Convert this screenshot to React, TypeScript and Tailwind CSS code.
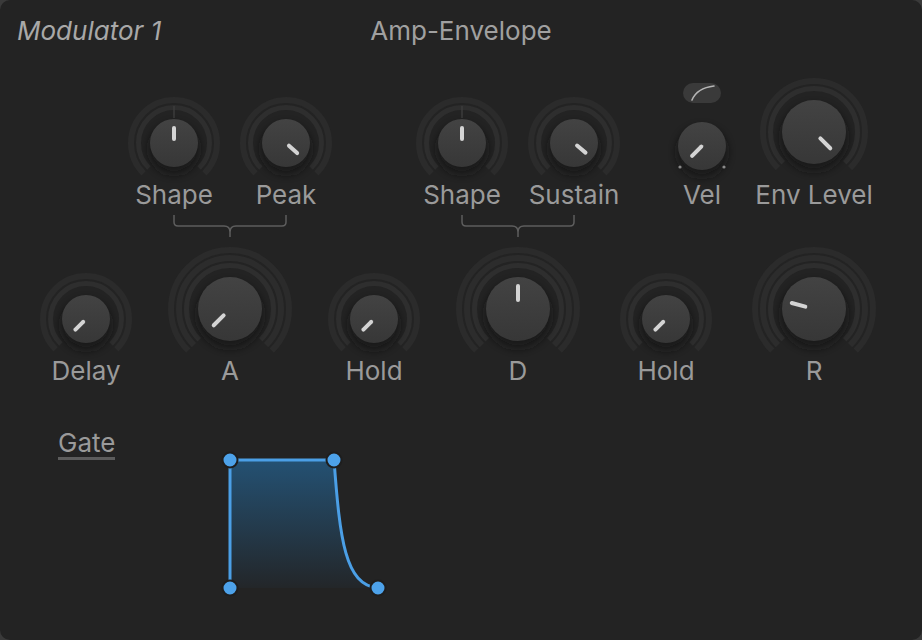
import { useId, type ReactNode } from "react";

type Ring = { r: number; w: number; c: string };

const SMALL_RINGS: Ring[] = [
  { r: 43, w: 6, c: "#2b2b2b" },
  { r: 35.5, w: 5, c: "#2e2e2e" },
];
const BIG_RINGS: Ring[] = [
  { r: 59, w: 6, c: "#2b2b2b" },
  { r: 51, w: 6, c: "#2c2c2c" },
  { r: 43.5, w: 5, c: "#2e2e2e" },
];
const ENV_RINGS: Ring[] = [
  { r: 51, w: 6, c: "#2b2b2b" },
  { r: 43.5, w: 5, c: "#2e2e2e" },
];

const pt = (cx: number, cy: number, r: number, deg: number) => {
  const a = (deg * Math.PI) / 180;
  return [cx + r * Math.sin(a), cy - r * Math.cos(a)];
};

const arc = (cx: number, cy: number, r: number) => {
  const [x1, y1] = pt(cx, cy, r, -135);
  const [x2, y2] = pt(cx, cy, r, 135);
  return `M${x1} ${y1} A${r} ${r} 0 1 1 ${x2} ${y2}`;
};

type DialProps = {
  width: number;
  height: number;
  cy: number;
  body: number;
  angle: number;
  rings?: Ring[];
  tick?: [number, number];
  bipolar?: boolean;
  children?: ReactNode;
};

function Dial({ width, height, cy, body, angle, rings = [], tick = [4, 15], bipolar, children }: DialProps) {
  const id = useId().replace(/[^a-zA-Z0-9]/g, "");
  const cx = width / 2;
  const [x1, y1] = pt(cx, cy, tick[0], angle);
  const [x2, y2] = pt(cx, cy, tick[1], angle);

  return (
    <svg width={width} height={height} viewBox={`0 0 ${width} ${height}`} className="block shrink-0 overflow-visible">
      <defs>
        <linearGradient id={`g${id}`} x1="0" y1="0" x2="0" y2="1">
          <stop offset="0" stopColor="#434343" />
          <stop offset="1" stopColor="#373737" />
        </linearGradient>
        <filter id={`s${id}`} x="-60%" y="-60%" width="220%" height="220%">
          <feGaussianBlur stdDeviation="4" />
        </filter>
      </defs>
      {rings.map((ring) => (
        <path key={ring.r} d={arc(cx, cy, ring.r)} fill="none" stroke={ring.c} strokeWidth={ring.w} />
      ))}
      {bipolar && <line x1={cx} y1={cy - 37} x2={cx} y2={cy - body - 1} stroke="#3d3d3d" strokeWidth={1.5} />}
      <circle cx={cx} cy={cy + 6} r={body + 1} fill="#121212" opacity={0.75} filter={`url(#s${id})`} />
      <circle cx={cx} cy={cy} r={body} fill={`url(#g${id})`} />
      <line x1={x1} y1={y1} x2={x2} y2={y2} stroke="#d4d4d4" strokeWidth={4} strokeLinecap="round" />
      {children}
    </svg>
  );
}

function Label({ children }: { children: ReactNode }) {
  return <span className="block whitespace-nowrap text-[26px] leading-[28px] text-[#9a9a9a]">{children}</span>;
}

function SmallKnob({ label, angle, bipolar, top }: { label: string; angle: number; bipolar?: boolean; top: "row1" | "row2" }) {
  return (
    <div className={`flex flex-col items-center ${top === "row1" ? "mt-[19px] w-[112px]" : "mt-[26px] w-full"}`}>
      <Dial width={92} height={top === "row1" ? 84 : 84} cy={46} body={24} angle={angle} rings={SMALL_RINGS} bipolar={bipolar} />
      <Label>{label}</Label>
    </div>
  );
}

function BigKnob({ label, angle }: { label: string; angle: number }) {
  return (
    <div className="flex w-full flex-col items-center">
      <Dial width={124} height={110} cy={62} body={32} angle={angle} rings={BIG_RINGS} tick={[9, 23]} />
      <Label>{label}</Label>
    </div>
  );
}

function Bracket() {
  return (
    <svg width="116" height="26" viewBox="0 0 116 26" className="mx-auto mt-[4px] block">
      <path
        d="M2 2 V9 Q2 13 6 13 H52 Q58 13 58 19 M114 2 V9 Q114 13 110 13 H64 Q58 13 58 19 V24"
        fill="none"
        stroke="#5e5e5e"
        strokeWidth="1.5"
      />
    </svg>
  );
}

function Envelope() {
  return (
    <svg width="180" height="160" viewBox="0 0 180 160" className="mt-[16px] block shrink-0">
      <defs>
        <linearGradient id="envfill" x1="0" y1="0" x2="0" y2="1">
          <stop offset="0" stopColor="#245173" />
          <stop offset="1" stopColor="#232629" />
        </linearGradient>
      </defs>
      <path d="M15 15 H119 C125 95 130 140 163 143 H15 Z" fill="url(#envfill)" />
      <path d="M15 143 V15 H119 C125 95 130 140 163 143" fill="none" stroke="#4b9fe6" strokeWidth="3" />
      {[
        [15, 15],
        [119, 15],
        [163, 143],
        [15, 143],
      ].map(([x, y]) => (
        <circle key={`${x}-${y}`} cx={x} cy={y} r={7.5} fill="#4da2ea" stroke="#1e1e1e" strokeWidth="2" />
      ))}
    </svg>
  );
}

export default function App() {
  return (
    <div className="h-[640px] w-[922px] bg-[#3a3a3a] font-[Inter,'Noto_Sans',sans-serif]">
      <div className="h-full w-full overflow-hidden rounded-[10px] bg-[#232323]">
        <header className="mt-[17px] grid h-[28px] grid-cols-[1fr_auto_1fr]">
          <span className="pl-[17px] text-[26px] leading-[28px] italic text-[#a8a8a8]">Modulator 1</span>
          <span className="text-[26px] leading-[28px] text-[#a0a0a0]">Amp-Envelope</span>
          <span />
        </header>

        <section className="mt-[33px] flex items-start pl-[118px]">
          <div className="flex w-[224px] flex-col">
            <div className="flex">
              <SmallKnob label="Shape" angle={0} bipolar top="row1" />
              <SmallKnob label="Peak" angle={132} top="row1" />
            </div>
            <Bracket />
          </div>

          <div className="ml-[64px] flex w-[224px] flex-col">
            <div className="flex">
              <SmallKnob label="Shape" angle={0} bipolar top="row1" />
              <SmallKnob label="Sustain" angle={130} top="row1" />
            </div>
            <Bracket />
          </div>

          <div className="ml-[16px] flex w-[112px] flex-col items-center">
            <button className="mt-[5px] flex h-[20px] w-[38px] items-center justify-center rounded-full bg-[#3a3a3a]">
              <svg width="38" height="20" viewBox="0 0 38 20">
                <path d="M9 17 Q14 5 31 3" fill="none" stroke="#b5b5b5" strokeWidth="1.6" strokeLinecap="round" />
              </svg>
            </button>
            <div className="mt-[19px]">
              <Dial width={48} height={59} cy={24} body={24} angle={-135} tick={[1, 14]}>
                <circle cx={2} cy={45} r={1.6} fill="#8a8a8a" />
                <circle cx={46} cy={45} r={1.6} fill="#8a8a8a" />
              </Dial>
            </div>
            <Label>Vel</Label>
          </div>

          <div className="flex w-[112px] flex-col items-center">
            <Dial width={108} height={103} cy={54} body={32} angle={135} rings={ENV_RINGS} tick={[9, 23]} />
            <Label>Env Level</Label>
          </div>
        </section>

        <section className="mt-[8px] flex items-start pl-[14px]">
          <div className="w-[144px]">
            <SmallKnob label="Delay" angle={-135} top="row2" />
          </div>
          <div className="w-[144px]">
            <BigKnob label="A" angle={-135} />
          </div>
          <div className="w-[144px]">
            <SmallKnob label="Hold" angle={-135} top="row2" />
          </div>
          <div className="w-[144px]">
            <BigKnob label="D" angle={0} />
          </div>
          <div className="w-[152px]">
            <SmallKnob label="Hold" angle={-135} top="row2" />
          </div>
          <div className="w-[144px]">
            <BigKnob label="R" angle={-75} />
          </div>
        </section>

        <section className="mt-[44px] flex items-start">
          <div className="w-[215px] shrink-0 pl-[58px]">
            <span className="inline-block border-b-[3px] border-[#5c5c5c] text-[26px] leading-[28px] text-[#9a9a9a]">Gate</span>
          </div>
          <Envelope />
        </section>
      </div>
    </div>
  );
}
